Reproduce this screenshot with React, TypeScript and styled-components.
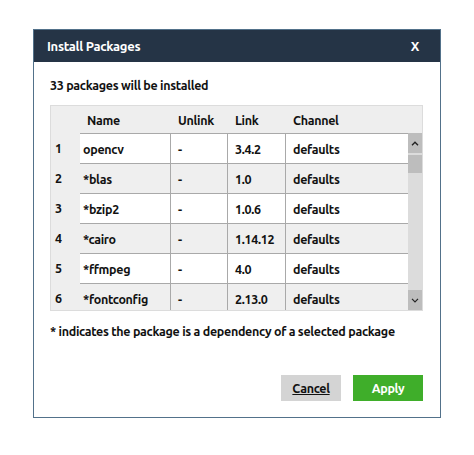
import {FC} from 'react';
import styled, {createGlobalStyle} from 'styled-components';

const FONT = `Ubuntu, 'Open Sans', 'Noto Sans', sans-serif`;

interface Pkg {
  name: string;
  unlink: string;
  link: string;
  channel: string;
}

const PACKAGES: Pkg[] = [
  {name: 'opencv', unlink: '-', link: '3.4.2', channel: 'defaults'},
  {name: '*blas', unlink: '-', link: '1.0', channel: 'defaults'},
  {name: '*bzip2', unlink: '-', link: '1.0.6', channel: 'defaults'},
  {name: '*cairo', unlink: '-', link: '1.14.12', channel: 'defaults'},
  {name: '*ffmpeg', unlink: '-', link: '4.0', channel: 'defaults'},
  {name: '*fontconfig', unlink: '-', link: '2.13.0', channel: 'defaults'},
];

const COLUMNS = '29px 91px 57px 58px 122px';

const GlobalStyle = createGlobalStyle`
  body {
    margin: 0;
    background: #ffffff;
    font-family: ${FONT};
    letter-spacing: -0.3px;
  }
`;

const App: FC = () => (
  <>
    <GlobalStyle />
    <Dialog>
      <TitleBar>
        <span>Install Packages</span>
        <span>X</span>
      </TitleBar>
      <Body>
        <Summary>33 packages will be installed</Summary>
        <Table>
          <HeadRow>
            <HeadCell />
            <HeadCell>Name</HeadCell>
            <HeadCell>Unlink</HeadCell>
            <HeadCell>Link</HeadCell>
            <HeadCell>Channel</HeadCell>
          </HeadRow>
          <Scroller>
            <Rows>
              {PACKAGES.map((p, i) => (
                <Row key={p.name} striped={i % 2 === 1}>
                  <IndexCell>{i + 1}</IndexCell>
                  <Cell tight>{p.name}</Cell>
                  <Cell>{p.unlink}</Cell>
                  <Cell>{p.link}</Cell>
                  <Cell last>{p.channel}</Cell>
                </Row>
              ))}
            </Rows>
            <ScrollBar>
              <ArrowButton>
                <svg width='8' height='5' viewBox='0 0 8 5'>
                  <path d='M1 4.2 L4 1.2 L7 4.2' fill='none' stroke='#222' strokeWidth='1.4' />
                </svg>
              </ArrowButton>
              <Thumb />
              <Track />
              <ArrowButton>
                <svg width='8' height='5' viewBox='0 0 8 5'>
                  <path d='M1 0.8 L4 3.8 L7 0.8' fill='none' stroke='#222' strokeWidth='1.2' />
                </svg>
              </ArrowButton>
            </ScrollBar>
          </Scroller>
        </Table>
        <Note>* indicates the package is a dependency of a selected package</Note>
        <Actions>
          <Button variant='cancel'>Cancel</Button>
          <Button variant='apply'>Apply</Button>
        </Actions>
      </Body>
    </Dialog>
  </>
);

const Dialog = styled.div`
  box-sizing: border-box;
  margin: 29px 0 0 33px;
  width: 408px;
  height: 389px;
  border: 1px solid #52718a;
  display: flex;
  flex-direction: column;
  background: #ffffff;
`;

const TitleBar = styled.div`
  height: 32px;
  background: #253446;
  display: flex;
  align-items: center;
  justify-content: space-between;
  padding: 0 21px 0 13px;
  color: #ffffff;
  font-weight: 700;
  font-size: 13px;
`;

const Body = styled.div`
  flex: 1;
  display: flex;
  flex-direction: column;
  padding: 15px 16px 16px 16px;
`;

const Summary = styled.p`
  margin: 0 0 11px 0;
  font-size: 12.5px;
  font-weight: 700;
  color: #111;
  line-height: 17px;
`;

const Table = styled.div`
  width: 373px;
  border: 1px solid #dcdcdc;
  box-sizing: border-box;
  background: #eeeeee;
`;

const HeadRow = styled.div`
  display: grid;
  grid-template-columns: ${COLUMNS};
  height: 27px;
  align-items: center;
`;

const HeadCell = styled.div`
  padding-left: 7px;
  font-size: 12.5px;
  font-weight: 700;
  color: #111;
`;

const Scroller = styled.div`
  display: flex;
  height: 177px;
  overflow: hidden;
`;

const Rows = styled.div`
  flex: 1;
  display: flex;
  flex-direction: column;
`;

const Row = styled.div<{striped: boolean}>`
  display: grid;
  grid-template-columns: ${COLUMNS};
  flex: 0 0 30px;
  background: ${({striped}) => (striped ? '#efefef' : '#ffffff')};
`;

const IndexCell = styled.div`
  background: #eeeeee;
  display: flex;
  align-items: center;
  padding-left: 4px;
  font-size: 12.5px;
  font-weight: 700;
  color: #111;
`;

const Cell = styled.div<{tight?: boolean; last?: boolean}>`
  display: flex;
  align-items: center;
  padding-left: ${({tight}) => (tight ? '3px' : '7px')};
  border-top: 1px solid #a9a9a9;
  border-right: ${({last}) => (last ? 'none' : '1px solid #a9a9a9')};
  font-size: 12.5px;
  font-weight: 700;
  color: #111;
  white-space: nowrap;
`;

const ScrollBar = styled.div`
  width: 16px;
  display: flex;
  flex-direction: column;
  background: #dcdcdc;
`;

const ArrowButton = styled.div`
  flex: 0 0 20px;
  background: #bdbdbd;
  display: flex;
  align-items: center;
  justify-content: center;
`;

const Thumb = styled.div`
  flex: 0 0 18px;
  margin-top: 2px;
  background: #bdbdbd;
`;

const Track = styled.div`
  flex: 1;
`;

const Note = styled.p`
  margin: 12px 0 0 0;
  font-size: 12.5px;
  font-weight: 700;
  color: #111;
  line-height: 17px;
`;

const Actions = styled.div`
  margin-top: auto;
  display: flex;
  justify-content: flex-end;
  gap: 12px;
  padding-right: 1px;
`;

const Button = styled.button<{variant: 'cancel' | 'apply'}>`
  height: 26px;
  border: none;
  font-family: ${FONT};
  font-size: 12.5px;
  font-weight: 700;
  letter-spacing: -0.3px;
  cursor: pointer;
  width: ${({variant}) => (variant === 'cancel' ? '60px' : '70px')};
  background: ${({variant}) => (variant === 'cancel' ? '#d4d4d4' : '#3fae2a')};
  color: ${({variant}) => (variant === 'cancel' ? '#111' : '#ffffff')};
  text-decoration: ${({variant}) => (variant === 'cancel' ? 'underline' : 'none')};
`;

export default App;
